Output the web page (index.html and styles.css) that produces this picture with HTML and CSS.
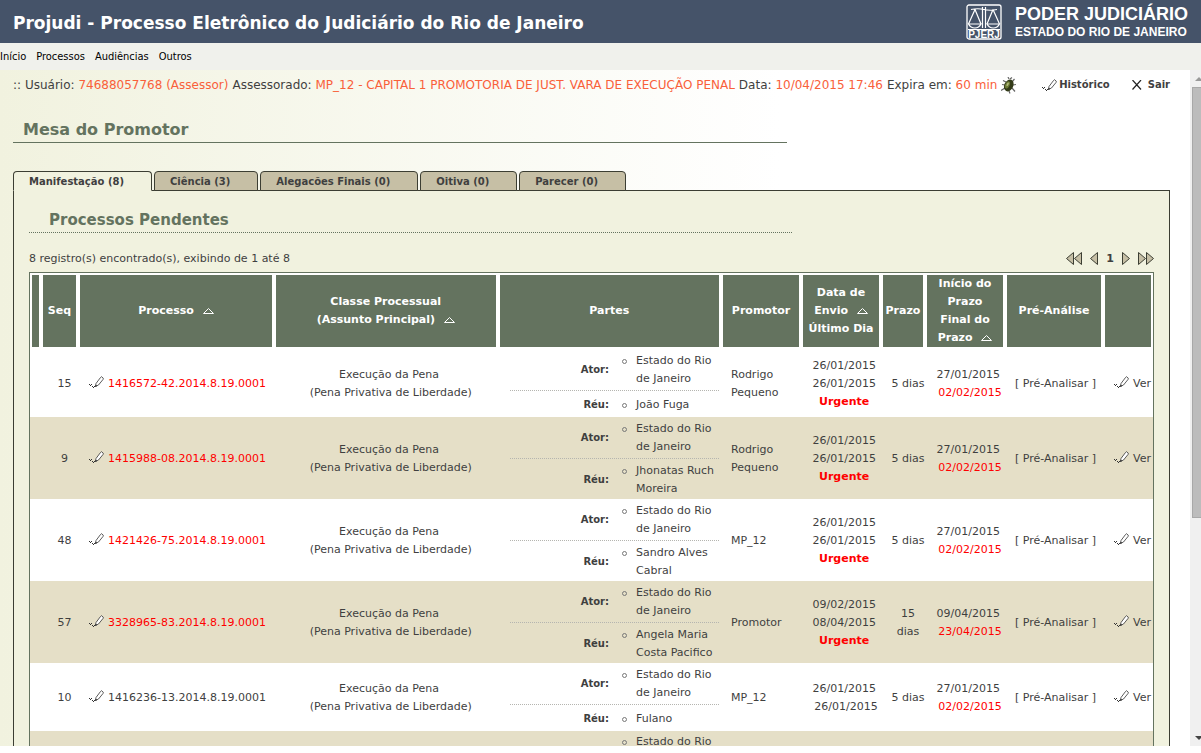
FILE: index.html
```html
<!DOCTYPE html>
<html lang="pt-BR">
<head>
<meta charset="utf-8">
<title>Projudi - Processo Eletrônico do Judiciário do Rio de Janeiro</title>
<link rel="stylesheet" href="styles.css">
</head>
<body>
<svg class="defs" aria-hidden="true">
  <symbol id="pencil" viewBox="0 0 15 12">
    <path d="M0 8.500h1M1 9.500h1M2 8.500h1M3 10.500h1M4 11.500h1M5 10.500h1" stroke="#333" fill="none"/>
    <path d="M6.500 10.500L7 7.500 11.500 1.500 12.500.700 14.300 2.200 14 3.500 9.500 9z" fill="#fff" stroke="#333" stroke-width=".8"/>
    <path d="M6.500 10.500l.3-1.400 1 .8z" fill="#222" stroke="#222" stroke-width=".4"/>
  </symbol>
  <symbol id="sort" viewBox="0 0 11 6">
    <path d="M.5 5.500L5.500.500l5 5z" fill="none" stroke="#fff"/>
  </symbol>
</svg>
<header class="top">
  <h1 class="brand">Projudi - Processo Eletrônico do Judiciário do Rio de Janeiro</h1>
  <div class="court">
    <svg class="court-mark" viewBox="0 0 36 36" aria-hidden="true">
      <rect x="1" y="1" width="34" height="34" rx="2" fill="none" stroke="#fff" stroke-width="1.300"/>
      <path d="M16.500 3v21M19.500 3v21M5 5.500Q12 4 18 5.500T31 5.500M9 5.500L2.500 20M9 5.500L15 20M27 5.500L21 20M27 5.500L33.500 20" fill="none" stroke="#fff" stroke-width="1.200"/>
      <path d="M2.500 20h12.500q-2 4-6.200 4t-6.300-4zM21 20h12.500q-2 4-6.200 4t-6.300-4z" fill="none" stroke="#fff" stroke-width="1.200"/>
      <path d="M2 25.500h32" stroke="#fff"/>
      <text x="18" y="34" text-anchor="middle" class="court-tag">PJERJ</text>
    </svg>
    <div class="court-text"><strong>PODER JUDICIÁRIO</strong><span>ESTADO DO RIO DE JANEIRO</span></div>
  </div>
</header>
<nav class="menu">
  <a href="#">Início</a><a href="#">Processos</a><a href="#">Audiências</a><a href="#">Outros</a>
</nav>
<div class="frame">
  <main class="page">
    <div class="userbar">
      <span>:: Usuário: <em>74688057768 (Assessor)</em></span>
      <span>Assessorado: <em>MP_12 - CAPITAL 1 PROMOTORIA DE JUST. VARA DE EXECUÇÃO PENAL</em></span>
      <span>Data: <em>10/04/2015 17:46</em></span>
      <span>Expira em: <em>60 min</em></span>
      <svg class="bug" viewBox="0 0 15 17" aria-hidden="true">
        <path d="M5 5L2 3.500M4 8L1 7.500M4 11L0 13.500M11 5l2.500-3M12 8l3-.5M11 11l3 3.500M8 2L7 0M9 2l2-1.500M8 14l1 2.500" stroke="#666" stroke-width="1.200" fill="none"/>
        <ellipse cx="8" cy="8.500" rx="4.500" ry="6.200" fill="#333b18" transform="rotate(25 8 8)"/>
        <ellipse cx="6.500" cy="8.500" rx="2.200" ry="3.800" fill="#6c7a35" transform="rotate(25 8 8)"/>
        <ellipse cx="6.500" cy="8" rx=".9" ry="2" fill="#b4bd80" transform="rotate(25 8 8)"/>
      </svg>
      <span class="actions">
        <a href="#"><svg class="pencil"><use href="#pencil"/></svg>Histórico</a>
        <a href="#"><svg class="cross" viewBox="0 0 10 10" aria-hidden="true"><path d="M.5 0l8.500 9.500M9 0L.5 9.500" stroke="#222" stroke-width="1.200" fill="none"/></svg>Sair</a>
      </span>
    </div>
    <h2 class="title">Mesa do Promotor</h2>
    <div class="tabs">
      <a href="#" class="tab active">Manifestação (8)</a>
      <a href="#" class="tab">Ciência (3)</a>
      <a href="#" class="tab">Alegacões Finais (0)</a>
      <a href="#" class="tab">Oitiva (0)</a>
      <a href="#" class="tab">Parecer (0)</a>
    </div>
    <section class="panel">
      <h3 class="subtitle">Processos Pendentes</h3>
      <div class="summary">
        <span>8 registro(s) encontrado(s), exibindo de 1 até 8</span>
        <span class="pager">
          <a href="#" aria-label="Primeira"><svg width="16" height="14" viewBox="0 0 16 14"><path d="M7.500.500v12L.500 6.500zM15.500.500v12l-7-6z"/></svg></a>
          <a href="#" aria-label="Anterior"><svg width="8" height="14" viewBox="0 0 8 14"><path d="M7.500.500v12L.500 6.500z"/></svg></a>
          <b>1</b>
          <a href="#" aria-label="Próxima"><svg width="8" height="14" viewBox="0 0 8 14"><path d="M.500.500v12l7-6z"/></svg></a>
          <a href="#" aria-label="Última"><svg width="16" height="14" viewBox="0 0 16 14"><path d="M.500.500v12l7-6zM8.500.500v12l7-6z"/></svg></a>
        </span>
      </div>
      <div class="grid-box">
      <table class="grid">
        <colgroup><col class="c-mark"><col class="c-seq"><col class="c-proc"><col class="c-class"><col class="c-parts"><col class="c-med"><col class="c-med"><col class="c-term"><col class="c-med"><col class="c-pre"><col class="c-view"></colgroup>
        <thead><tr>
          <th></th><th>Seq</th><th>Processo <svg class="sort"><use href="#sort"/></svg></th>
          <th>Classe Processual<br>(Assunto Principal) <svg class="sort"><use href="#sort"/></svg></th>
          <th>Partes</th><th>Promotor</th><th>Data de<br>Envio <svg class="sort"><use href="#sort"/></svg><br>Último Dia</th><th>Prazo</th>
          <th>Início do<br>Prazo<br>Final do<br>Prazo <svg class="sort"><use href="#sort"/></svg></th><th>Pré-Análise</th><th></th>
        </tr></thead>
        <tbody>
        <tr>
          <td></td><td>15</td>
          <td class="left"><a href="#" class="late"><svg class="pencil"><use href="#pencil"/></svg>1416572-42.2014.8.19.0001</a></td>
          <td>Execução da Pena&nbsp;<br>(Pena Privativa de Liberdade)</td>
          <td class="parts"><dl><div><dt>Ator:</dt><dd>Estado do Rio<br>de Janeiro</dd></div><div><dt>Réu:</dt><dd>João Fuga</dd></div></dl></td>
          <td class="left">Rodrigo<br>Pequeno</td>
          <td>26/01/2015&nbsp;<br>26/01/2015&nbsp;<br><b class="late">Urgente&nbsp;</b></td>
          <td>5 dias</td><td>27/01/2015&nbsp;<br><span class="late">02/02/2015</span></td>
          <td class="left"><a href="#">[ Pré-Analisar ]</a></td>
          <td class="left"><a href="#"><svg class="pencil"><use href="#pencil"/></svg>Ver</a></td>
        </tr>
        <tr>
          <td></td><td>9</td>
          <td class="left"><a href="#" class="late"><svg class="pencil"><use href="#pencil"/></svg>1415988-08.2014.8.19.0001</a></td>
          <td>Execução da Pena&nbsp;<br>(Pena Privativa de Liberdade)</td>
          <td class="parts"><dl><div><dt>Ator:</dt><dd>Estado do Rio<br>de Janeiro</dd></div><div><dt>Réu:</dt><dd>Jhonatas Ruch<br>Moreira</dd></div></dl></td>
          <td class="left">Rodrigo<br>Pequeno</td>
          <td>26/01/2015&nbsp;<br>26/01/2015&nbsp;<br><b class="late">Urgente&nbsp;</b></td>
          <td>5 dias</td><td>27/01/2015&nbsp;<br><span class="late">02/02/2015</span></td>
          <td class="left"><a href="#">[ Pré-Analisar ]</a></td>
          <td class="left"><a href="#"><svg class="pencil"><use href="#pencil"/></svg>Ver</a></td>
        </tr>
        <tr>
          <td></td><td>48</td>
          <td class="left"><a href="#" class="late"><svg class="pencil"><use href="#pencil"/></svg>1421426-75.2014.8.19.0001</a></td>
          <td>Execução da Pena&nbsp;<br>(Pena Privativa de Liberdade)</td>
          <td class="parts"><dl><div><dt>Ator:</dt><dd>Estado do Rio<br>de Janeiro</dd></div><div><dt>Réu:</dt><dd>Sandro Alves<br>Cabral</dd></div></dl></td>
          <td class="left">MP_12</td>
          <td>26/01/2015&nbsp;<br>26/01/2015&nbsp;<br><b class="late">Urgente&nbsp;</b></td>
          <td>5 dias</td><td>27/01/2015&nbsp;<br><span class="late">02/02/2015</span></td>
          <td class="left"><a href="#">[ Pré-Analisar ]</a></td>
          <td class="left"><a href="#"><svg class="pencil"><use href="#pencil"/></svg>Ver</a></td>
        </tr>
        <tr>
          <td></td><td>57</td>
          <td class="left"><a href="#" class="late"><svg class="pencil"><use href="#pencil"/></svg>3328965-83.2014.8.19.0001</a></td>
          <td>Execução da Pena&nbsp;<br>(Pena Privativa de Liberdade)</td>
          <td class="parts"><dl><div><dt>Ator:</dt><dd>Estado do Rio<br>de Janeiro</dd></div><div><dt>Réu:</dt><dd>Angela Maria<br>Costa Pacifico</dd></div></dl></td>
          <td class="left">Promotor</td>
          <td>09/02/2015&nbsp;<br>08/04/2015&nbsp;<br><b class="late">Urgente&nbsp;</b></td>
          <td>15<br>dias</td><td>09/04/2015&nbsp;<br><span class="late">23/04/2015</span></td>
          <td class="left"><a href="#">[ Pré-Analisar ]</a></td>
          <td class="left"><a href="#"><svg class="pencil"><use href="#pencil"/></svg>Ver</a></td>
        </tr>
        <tr>
          <td></td><td>10</td>
          <td class="left"><a href="#"><svg class="pencil"><use href="#pencil"/></svg>1416236-13.2014.8.19.0001</a></td>
          <td>Execução da Pena&nbsp;<br>(Pena Privativa de Liberdade)</td>
          <td class="parts"><dl><div><dt>Ator:</dt><dd>Estado do Rio<br>de Janeiro</dd></div><div><dt>Réu:</dt><dd>Fulano</dd></div></dl></td>
          <td class="left">MP_12</td>
          <td>26/01/2015&nbsp;<br>26/01/2015</td>
          <td>5 dias</td><td>27/01/2015&nbsp;<br><span class="late">02/02/2015</span></td>
          <td class="left"><a href="#">[ Pré-Analisar ]</a></td>
          <td class="left"><a href="#"><svg class="pencil"><use href="#pencil"/></svg>Ver</a></td>
        </tr>
        <tr>
          <td></td><td></td><td></td><td></td>
          <td class="parts"><dl><div><dt></dt><dd>Estado do Rio</dd></div></dl></td>
          <td></td><td></td><td></td><td></td><td></td><td></td>
        </tr>
        </tbody>
      </table>
      </div>
    </section>
  </main>
  <div class="scroll" aria-hidden="true"><i class="up"></i><i class="thumb"></i><i class="down"></i></div>
</div>
</body>
</html>
```
FILE: styles.css
```css
* { box-sizing: border-box; }
body {
  margin: 0;
  height: 100vh;
  padding-bottom: 7px;
  display: flex;
  flex-direction: column;
  overflow: hidden;
  background: #fff;
  color: #3f3f3f;
  font: 11px/18px "DejaVu Sans", Verdana, sans-serif;
}
a { color: inherit; text-decoration: none; }
em { font-style: normal; color: #f9603a; }
.defs { position: absolute; width: 0; height: 0; }

.top {
  flex: none;
  height: 43px;
  padding: 0 13px;
  display: flex;
  align-items: center;
  justify-content: space-between;
  background: #455369;
  color: #fff;
}
.brand { margin: 0; padding-top: 3px; font-size: 17px; }
.court { display: flex; gap: 13px; }
.court-mark { width: 36px; height: 36px; }
.court-tag { font: bold 10px "Liberation Sans", Arial, sans-serif; fill: #fff; }
.court-text {
  display: flex;
  flex-direction: column;
  font: bold 12px/16px "Liberation Sans", Arial, sans-serif;
}
.court-text strong { font-size: 18px; line-height: 20px; }

.menu {
  flex: none;
  height: 27px;
  padding-top: 1px;
  display: flex;
  align-items: center;
  gap: 10px;
  background: #f0f1ec;
  color: #000;
  font-family: "DejaVu Sans Condensed", Tahoma, sans-serif;
}

.frame { flex: 1; min-height: 0; display: flex; overflow: hidden; }
.page {
  flex: 1;
  min-width: 0;
  padding: 6px 20px 0 13px;
  background: linear-gradient(to right, #f1f2df, #fff 780px);
}
.userbar { display: flex; align-items: center; gap: 4px; font-size: 12px; white-space: nowrap; }
.bug { width: 15px; height: 17px; flex: none; }
.actions { display: flex; gap: 22px; margin-left: auto; font-weight: bold; font-size: 10px; }
.actions a { display: flex; align-items: center; }
.cross { width: 10px; height: 10px; margin-right: 6px; }
.title {
  width: 774px;
  margin: 24px 0 28px;
  padding: 0 10px;
  border-bottom: 1px solid #64735f;
  color: #64735f;
  font-size: 16px;
  line-height: 24px;
}

.tabs { display: flex; gap: 2px; margin-bottom: -1px; position: relative; }
.tab {
  height: 20px;
  padding: 0 27px 0 15px;
  border: 1px solid #3c3e33;
  border-radius: 4px 4px 0 0;
  background: #c6bfa5;
  font-size: 10px;
  font-weight: bold;
  line-height: 20px;
}
.tab.active { background: #f1f2df; border-bottom-color: #f1f2df; }
.panel {
  padding: 17px 15px;
  border: 1px solid #3c3e33;
  background: #f1f2df;
}
.subtitle {
  width: 763px;
  margin: 0 0 17px;
  padding: 0 20px;
  border-bottom: 1px dotted #64735f;
  color: #64735f;
  font-size: 15px;
  line-height: 24px;
}
.summary { display: flex; justify-content: space-between; margin-bottom: 4px; }
.pager { display: flex; align-items: center; gap: 8px; }
.pager a { display: flex; }
.pager path { fill: #c6bfa5; stroke: #3c3e33; }

.grid-box { border: 1px solid #64735f; background: #fff; overflow: hidden; }
.grid { width: 100%; table-layout: fixed; border-spacing: 0; white-space: nowrap; }
.c-mark { width: 11px; }
.c-seq { width: 37px; }
.c-proc { width: 196px; }
.c-med { width: 80px; }
.c-term { width: 44px; }
.c-pre { width: 98px; }
.c-view { width: 50px; }
.grid th {
  padding: 0;
  border: 2px solid #fff;
  background: #64735f;
  background-clip: padding-box;
  color: #fff;
}
.grid td { padding: 2px 0 0 10px; text-align: center; }
.grid td:first-child { padding: 0; }
.grid tbody tr:nth-child(even) { background: #e5dfc7; }
.grid td.left { text-align: left; }
.grid .late { color: #f00; }
.grid td.parts { padding: 0 2px 0 12px; }
.pencil { width: 15px; height: 12px; margin: 0 4px 0 1px; vertical-align: -1px; }
.actions .pencil { margin: 0 2px 0 0; }
.sort { width: 11px; height: 6px; margin-left: 5px; }

.parts dl { margin: 0; }
.parts dl > div { display: flex; align-items: center; min-height: 27px; padding: 3px 0 1px; }
.parts dl > div + div { border-top: 1px dotted #b5b5b0; }
.parts dl > div:first-child { min-height: 0; padding: 2px 0; }
.parts dl > div:first-child:not(:only-child) { padding: 3px 0 2px; }
.parts dt { flex: 1; padding-right: 13px; text-align: right; font-size: 10px; font-weight: bold; }
.parts dd { width: 97px; margin: 0; display: flex; text-align: left; }
.parts dd::before {
  content: "";
  flex: none;
  width: 3px;
  height: 3px;
  margin: 7px 9px 0 0;
  border: 1px solid #777;
  border-radius: 50%;
}

.scroll {
  flex: none;
  width: 11px;
  padding-left: 2px;
  display: flex;
  flex-direction: column;
  background: #f0f0f0;
}
.thumb { height: 431px; background: #bcbcbc; border: 1px solid #a8a8a8; border-right: 0; margin-bottom: auto; }
.up, .down { height: 17px; display: flex; align-items: center; overflow: hidden; }
.up::before, .down::before { content: ""; margin-left: 3px; border: 4px solid transparent; }
.up::before { border-top: 0; border-bottom-color: #999; }
.down::before { border-bottom: 0; border-top-color: #444; }
```
